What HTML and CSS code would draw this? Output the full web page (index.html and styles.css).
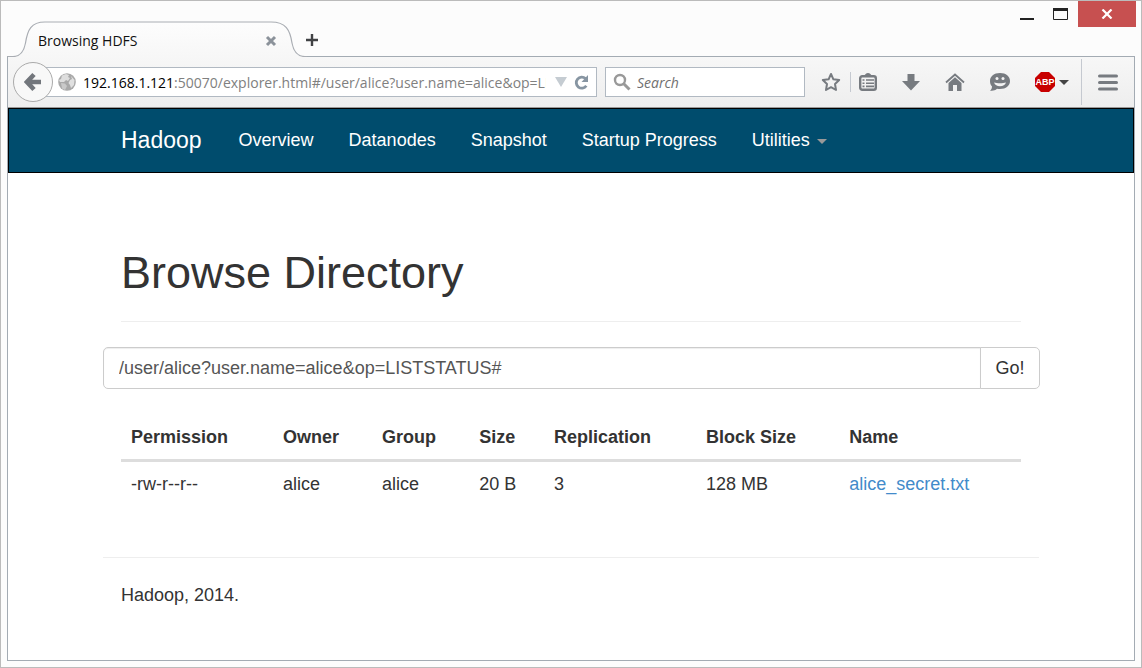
FILE: index.html
```html
<!DOCTYPE html>
<html lang="en">
<head>
<meta charset="utf-8">
<title>Browsing HDFS</title>
<link rel="stylesheet" href="styles.css">
</head>
<body>
<div class="window">
  <header class="titlebar">
    <div class="tab">
      <svg class="tab-shape" width="300" height="36" viewBox="0 0 300 36" aria-hidden="true">
        <defs><linearGradient id="tabfill" x1="0" y1="0" x2="0" y2="1"><stop offset="0" stop-color="#fdfdfd"/><stop offset="1" stop-color="#f7f7f7"/></linearGradient></defs>
        <path d="M1 36V35.500H6C14 35.500 17 30 18.500 22C20.500 9 24 1 38 1H264C279 1 283 9 285 22C286.500 30 290 35.500 298 35.500V36Z" fill="url(#tabfill)"/>
        <path d="M0 35.500H6C14 35.500 17 30 18.500 22C20.500 9 24 1 38 1H264C279 1 283 9 285 22C286.500 30 290 35.500 298 35.500H300" fill="none" stroke="#a9adb3" stroke-width="1.200"/>
      </svg>
      <span class="tab-title">Browsing HDFS</span>
      <button class="icon-btn tab-close" aria-label="Close tab"><svg width="12" height="12" viewBox="0 0 12 12"><path d="M2 2L10 10M10 2L2 10" stroke="#8b929a" stroke-width="3"/></svg></button>
    </div>
    <button class="icon-btn new-tab" aria-label="New tab"><svg width="14" height="14" viewBox="0 0 14 14"><path d="M7 1V13M1 7H13" stroke="#404244" stroke-width="2.400"/></svg></button>
    <div class="controls">
      <button class="icon-btn minimize" aria-label="Minimize"><svg width="14" height="12" viewBox="0 0 14 12"><path d="M0 10H14V12H0Z" fill="#222"/></svg></button>
      <button class="icon-btn maximize" aria-label="Maximize"><svg width="15" height="12" viewBox="0 0 15 12"><path d="M.5.500H14.500V11.500H.5Z" fill="none" stroke="#222"/><path d="M0 0H15V3H0Z" fill="#222"/></svg></button>
      <button class="icon-btn close" aria-label="Close window"><svg width="12" height="10" viewBox="0 0 12 10"><path d="M1.500.500L10.500 9.500M10.500.500L1.500 9.500" stroke="#fff" stroke-width="2.200"/></svg></button>
    </div>
  </header>

  <div class="client">
    <div class="toolbar">
      <button class="icon-btn back" aria-label="Back"><svg width="18" height="20" viewBox="0 0 18 20"><path d="M10 2.500L3 10L10 17.500M3.500 10H17" fill="none" stroke="#72767c" stroke-width="4.600"/></svg></button>
      <div class="urlbar">
        <svg width="18" height="18" viewBox="0 0 18 18" aria-hidden="true"><circle cx="9" cy="9" r="8.800" fill="#a9a9a9"/><path d="M4 2.500L8 1L11 2L10 4L12 5L10 8L8 7L6 9L2 9L1 7L3 6Z" fill="#dedede"/><path d="M3 10L7 10.500L9 13L7 17L4 15.500Z" fill="#c9c9c9"/><path d="M13 3L16.500 7L16 12L13 15L12 12L10.500 10L12 7L14 6Z" fill="#e0e0e0"/></svg>
        <label class="host" for="url">192.168.1.121</label>
        <input id="url" class="url" type="text" value=":50070/explorer.html#/user/alice?user.name=alice&amp;op=LISTSTATUS#">
        <button class="icon-btn history" aria-label="Show history"><svg width="12" height="10" viewBox="0 0 12 10"><path d="M0 0H12L6 10Z" fill="#c5ccd2"/></svg></button>
        <button class="icon-btn" aria-label="Reload"><svg width="15" height="15" viewBox="0 0 15 15"><path d="M11.500 3.600A5.500 5.500 0 1 0 12.300 10.800" fill="none" stroke="#8795a2" stroke-width="2.800"/><path d="M14 0V7H7.500Z" fill="#8795a2"/></svg></button>
      </div>
      <label class="searchbox">
        <svg width="18" height="18" viewBox="0 0 18 18" aria-hidden="true"><circle cx="7" cy="7" r="5" fill="none" stroke="#999" stroke-width="2.400"/><path d="M10.500 10.500L16.500 16.500" stroke="#999" stroke-width="3"/></svg>
        <input class="search" type="search" placeholder="Search" aria-label="Search">
      </label>
      <div class="tools">
        <button class="icon-btn" aria-label="Bookmark"><svg width="20" height="20" viewBox="0 0 20 20"><path d="M10 2L12.400 7.300L18.200 8L14 12L15 18L10 15.200L5 18L6 12L1.800 8L7.600 7.300Z" fill="none" stroke="#777b80" stroke-width="2" stroke-linejoin="round"/></svg></button>
        <span class="divider short"></span>
        <button class="icon-btn" aria-label="Bookmarks list"><svg width="18" height="20" viewBox="0 0 18 20"><rect x="1.200" y="4.200" width="15.600" height="13.600" rx="2" fill="none" stroke="#777b80" stroke-width="2.400"/><path d="M5 5C6 2 7 1 9 1C11 1 12 2 13 5Z" fill="#777b80"/><path d="M3.500 8H5.500M7 8H15M3.500 11.200H5.500M7 11.200H15M3.500 14.400H5.500M7 14.400H15" stroke="#777b80" stroke-width="1.600"/></svg></button>
        <button class="icon-btn" aria-label="Downloads"><svg width="18" height="18" viewBox="0 0 18 18"><path d="M5.500 1H12.500V8H18L9 17.500L0 8H5.500Z" fill="#777b80"/></svg></button>
        <button class="icon-btn home" aria-label="Home"><svg width="20" height="18" viewBox="0 0 20 18"><path d="M1 9.500L10 1.500L19 9.500" fill="none" stroke="#777b80" stroke-width="1.800"/><path d="M3.500 10L10 4.200L16.500 10V18H12V12H8V18H3.500Z" fill="#777b80"/></svg></button>
        <button class="icon-btn chat" aria-label="Chat"><svg width="22" height="20" viewBox="0 0 22 20"><path d="M11 1C17 1 21 4.500 21 9C21 13.500 17 17 11 17C10 17 9 17 8 16.700C6 18.500 3.500 19 1 18.500C2.500 17.500 3 16 3 14.500C1.500 13 1 11 1 9C1 4.500 5 1 11 1Z" fill="#777b80"/><circle cx="8" cy="6.500" r="1.500" fill="#f3f3f3"/><circle cx="14" cy="6.500" r="1.500" fill="#f3f3f3"/><path d="M5 10.500C8 11.500 14 11.500 17 10.500C16 13 14 14.200 11 14.200C8 14.200 6 13 5 10.500Z" fill="#f3f3f3"/></svg></button>
        <button class="icon-btn abp" aria-label="Adblock Plus"><svg width="20" height="20" viewBox="0 0 20 20"><path d="M6 0H14L20 6V14L14 20H6L0 14V6Z" fill="#c80000"/><text class="abp-text" x="10" y="13" text-anchor="middle">ABP</text></svg><svg width="10" height="5" viewBox="0 0 10 5"><path d="M0 0H10L5 5Z" fill="#444"/></svg></button>
        <span class="divider"></span>
        <button class="icon-btn" aria-label="Menu"><svg width="20" height="17" viewBox="0 0 20 17"><path d="M1.500 2H18.500M1.500 8.500H18.500M1.500 15H18.500" stroke="#777b80" stroke-width="3" stroke-linecap="round"/></svg></button>
      </div>
    </div>

    <nav class="navbar">
      <div class="container nav-row">
        <a class="brand" href="#">Hadoop</a>
        <a href="#">Overview</a>
        <a href="#">Datanodes</a>
        <a href="#">Snapshot</a>
        <a href="#">Startup Progress</a>
        <a class="menu-link" href="#">Utilities<span class="caret"></span></a>
      </div>
    </nav>

    <main class="container">
      <div class="inset">
        <h1>Browse Directory</h1>
      </div>
      <form class="path-form">
        <input class="path" type="text" aria-label="Directory" value="/user/alice?user.name=alice&amp;op=LISTSTATUS#">
        <button class="go" type="button">Go!</button>
      </form>
      <div class="inset">
        <table>
          <colgroup><col class="c-perm"><col class="c-owner"><col class="c-group"><col class="c-size"><col class="c-repl"><col class="c-block"><col></colgroup>
          <thead><tr><th>Permission</th><th>Owner</th><th>Group</th><th>Size</th><th>Replication</th><th>Block Size</th><th>Name</th></tr></thead>
          <tbody><tr><td>-rw-r--r--</td><td>alice</td><td>alice</td><td>20 B</td><td>3</td><td>128 MB</td><td><a href="#">alice_secret.txt</a></td></tr></tbody>
        </table>
      </div>
      <footer class="footer">Hadoop, 2014.</footer>
    </main>
  </div>
</div>
</body>
</html>
```
FILE: styles.css
```css
* { box-sizing: border-box; }
body {
  margin: 0;
  font-family: "Liberation Sans", Arial, sans-serif;
  font-size: 18px;
  line-height: 25px;
  color: #333;
}
svg { display: block; flex: none; }
.window {
  min-height: 100vh;
  display: flex;
  flex-direction: column;
  border: 1px solid #bbb;
  padding: 0 6px 6px;
  background: #fcfcfc;
}
.icon-btn {
  display: flex;
  align-items: center;
  justify-content: center;
  flex: none;
  padding: 0;
  border: 0;
  background: none;
}

/* Title bar */
.titlebar {
  display: flex;
  height: 56px;
  margin-bottom: -1px;
  align-items: flex-end;
  position: relative;
  z-index: 1;
}
.tab {
  position: relative;
  display: flex;
  align-items: center;
  justify-content: space-between;
  width: 300px;
  height: 36px;
  padding: 3px 30px 0 31px;
}
.tab-shape { position: absolute; left: 0; top: 0; }
.tab-title {
  position: relative;
  font: 14px/20px "Open Sans", sans-serif;
  color: #111;
}
.tab-close { position: relative; }
.new-tab { height: 34px; margin-left: -2px; }
.controls {
  display: flex;
  align-self: flex-start;
  align-items: flex-start;
  margin: 0 -1px 0 auto;
}
.minimize, .maximize { height: 26px; }
.minimize { margin-right: 19px; }
.maximize { margin-right: 10px; }
.close { width: 58px; height: 26px; background: #c75050; }

/* Toolbar */
.client {
  flex: 1;
  display: flex;
  flex-direction: column;
  border: 1px solid #a3abb3;
  background: #fff;
}
.toolbar {
  display: flex;
  align-items: center;
  height: 51px;
  padding: 0 16px 0 5px;
  border-bottom: 1px solid #999;
  background: linear-gradient(#f7f7f7, #eee);
}
.back {
  width: 40px;
  height: 40px;
  margin-right: -8px;
  border: 1px solid #aaa;
  border-radius: 50%;
  background: #f8f8f8;
  position: relative;
  z-index: 1;
}
.urlbar, .searchbox {
  display: flex;
  align-items: center;
  height: 30px;
  border: 1px solid #b1b9c2;
  background: #fff;
}
.urlbar {
  flex: 1;
  min-width: 0;
  padding: 0 7px 0 12px;
  font: 14px/20px "Open Sans", sans-serif;
}
.host { color: #000; margin-left: 7px; }
.url, .search {
  flex: 1;
  min-width: 0;
  padding: 0;
  border: 0;
  outline: 0;
  background: none;
  font: inherit;
  color: #808080;
}
.host, .url, .search { padding-top: 2px; }
.history { margin: 0 7px 0 9px; }
.searchbox { width: 200px; margin-left: 8px; padding: 0 7px; }
.search { margin-left: 6px; font: italic 14px/20px "Open Sans", sans-serif; }
.search::placeholder { color: #707070; }
.tools { display: flex; align-items: center; margin-left: 16px; }
.tools .icon-btn { margin-right: 25px; }
.tools .icon-btn:first-child { margin-right: 9px; }
.tools .icon-btn:last-child { margin-right: 0; }
.tools .home, .tools .chat { margin-right: 24px; }
.tools .abp { gap: 4px; margin-right: 12px; }
.abp-text { font: bold 9px "Liberation Sans", sans-serif; fill: #fff; }
.divider { width: 1px; height: 46px; margin-right: 16px; background: #c5c9d0; }
.short { height: 20px; margin-right: 8px; }

/* Page navigation */
.container { width: 100%; max-width: 936px; margin: 0 auto; }
.navbar { border: 1px solid #000; background: #004c6d; }
.nav-row {
  display: flex;
  align-items: center;
  gap: 35px;
  height: 63px;
  padding: 0 18px;
}
.nav-row a { color: #fff; text-decoration: none; white-space: nowrap; }
.nav-row .brand { font-size: 23px; margin-right: 2px; }
.menu-link { display: flex; align-items: center; }
.caret {
  margin: 2px 0 0 7px;
  border: 5px solid transparent;
  border-top-color: #999;
  border-bottom: 0;
}

/* Page content */
.inset { padding: 0 18px; }
h1 {
  margin: 75px 0 25px;
  padding-bottom: 23px;
  border-bottom: 1px solid #eee;
  font-size: 45px;
  font-weight: 400;
  line-height: 50px;
}
.path-form { display: flex; height: 42px; margin-right: -1px; }
.path, .go {
  border: 1px solid #ccc;
  background: #fff;
  font: inherit;
}
.path {
  flex: 1;
  min-width: 0;
  padding: 0 15px;
  border-radius: 5px 0 0 5px;
  box-shadow: inset 0 1px 1px #eee;
  color: #555;
}
.go {
  width: 60px;
  margin-left: -1px;
  padding: 0;
  border-radius: 0 5px 5px 0;
  color: #333;
}
table {
  width: 100%;
  margin: 25px 0 50px;
  border-collapse: separate;
  border-spacing: 0;
  table-layout: fixed;
}
th, td { padding: 10px; text-align: left; white-space: nowrap; }
th { padding: 11px 10px 9px; border-bottom: 3px solid #ddd; }
td a { color: #428bca; text-decoration: none; }
.c-perm, .c-repl { width: 16.9%; }
.c-owner { width: 11%; }
.c-group { width: 10.8%; }
.c-size { width: 8.3%; }
.c-block { width: 15.9%; }
.footer { padding: 25px 18px; border-top: 1px solid #eee; }
```
